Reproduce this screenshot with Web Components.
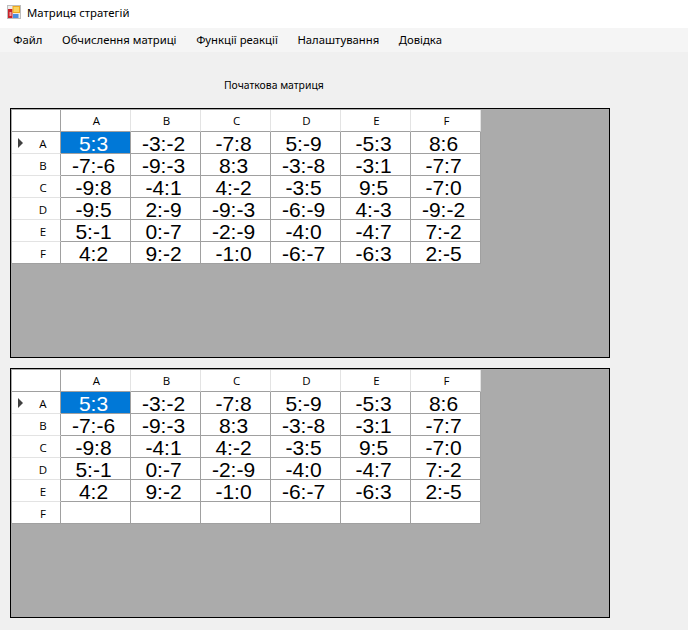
<!DOCTYPE html>
<html><head><meta charset="utf-8"><style>
html,body{margin:0;padding:0;background:#f0f0f0;width:688px;height:630px;overflow:hidden}
body{font:12px "Noto Sans",sans-serif;color:#000}
win-form{display:block}
</style></head><body>
<win-form>
<win-titlebar>Матриця стратегій</win-titlebar>
<win-menubar><win-menu>Файл</win-menu><win-menu>Обчислення матриці</win-menu><win-menu>Функції реакції</win-menu><win-menu>Налаштування</win-menu><win-menu>Довідка</win-menu></win-menubar>
<win-label>Початкова матриця</win-label>
<data-grid rows="5:3 -3:-2 -7:8 5:-9 -5:3 8:6|-7:-6 -9:-3 8:3 -3:-8 -3:1 -7:7|-9:8 -4:1 4:-2 -3:5 9:5 -7:0|-9:5 2:-9 -9:-3 -6:-9 4:-3 -9:-2|5:-1 0:-7 -2:-9 -4:0 -4:7 7:-2|4:2 9:-2 -1:0 -6:-7 -6:3 2:-5"></data-grid>
<data-grid rows="5:3 -3:-2 -7:8 5:-9 -5:3 8:6|-7:-6 -9:-3 8:3 -3:-8 -3:1 -7:7|-9:8 -4:1 4:-2 -3:5 9:5 -7:0|5:-1 0:-7 -2:-9 -4:0 -4:7 7:-2|4:2 9:-2 -1:0 -6:-7 -6:3 2:-5|     "></data-grid>
</win-form>
<script>
const def=(n,css,html,init)=>customElements.define(n,class extends HTMLElement{
  constructor(){super();this.attachShadow({mode:'open'}).innerHTML='<style>'+css+'</style>'+html;}
  connectedCallback(){init&&init(this)}
});
const UI='"Noto Sans",sans-serif';
def('win-titlebar',`:host{display:flex;align-items:center;gap:6px;height:28px;padding:0 0 4px 7px;box-sizing:border-box;background:#fff;font:11.35px ${UI}}svg{display:block}`,
`<svg width="14" height="14" viewBox="0 0 14 14"><rect x=".5" y=".5" width="13" height="13" fill="#ececec" stroke="#bdbdbd"/><rect x="1" y="4" width="4.500" height="9" fill="#c8242c"/><rect x="2.500" y="7" width="2" height="4" fill="#f2a0a0"/><rect x="5.500" y="1" width="7.500" height="7" fill="#eda820"/><rect x="6.500" y="2" width="5.500" height="5" fill="#fbd45e"/><rect x="6" y="9" width="5.500" height="4" fill="#4a8fe0"/></svg><slot></slot>`);
def('win-menubar',`:host{display:flex;height:24px;box-sizing:border-box;padding:0 0 2px 3.500px;align-items:center;background:#f5f5f5;font:11.3px ${UI}}`,`<slot></slot>`);
def('win-menu',`:host{display:block;padding:0 9.800px;white-space:nowrap}`,`<slot></slot>`);
def('win-label',`:host{display:flex;height:56px;box-sizing:border-box;padding:25px 0 0 224px;font:10.4px ${UI};line-height:16px}`,`<slot></slot>`);
def('data-grid',`:host{display:block;width:600px;height:250px;box-sizing:border-box;margin:0 0 10px 10px;border:1px solid #000;background:#ababab;padding:1px 0 0 1px;overflow:hidden}
.g{display:grid;grid-template-columns:49px repeat(6,70px);grid-auto-rows:22px;width:max-content}
.g>div{background:#fff;box-sizing:border-box;border-right:1px solid #a0a0a0;border-bottom:1px solid #a0a0a0;display:flex;align-items:center;justify-content:center;position:relative;white-space:nowrap}
.h{font:11.5px "Open Sans",sans-serif}
.ch{border-right-color:#e3e3e3!important;padding-left:2px}
.corner{border-right-color:#a0a0a0!important}
.rh{border-bottom-color:#e3e3e3!important;padding:2px 0 0 14px}
.rh.last{border-bottom-color:#a0a0a0!important}
.c{font:21px "Liberation Sans",Arial,sans-serif;padding:2px 4px 0 0}
.sel{background:#0078d7!important;color:#fff}
.arrow{position:absolute;left:6px;top:6px;width:0;height:0;border-left:5px solid #404040;border-top:5px solid transparent;border-bottom:5px solid transparent}`,
`<div class="g"></div>`,el=>{
  const L='ABCDEF',g=el.shadowRoot.querySelector('.g');
  const rows=el.getAttribute('rows').split('|').map(r=>r.split(' '));
  let h='<div class="h ch corner"></div>';
  for(const c of L)h+=`<div class="h ch">${c}</div>`;
  rows.forEach((r,i)=>{
    h+=`<div class="h rh${i==5?' last':''}">${i==0?'<span class="arrow"></span>':''}${L[i]}</div>`;
    r.forEach((v,j)=>h+=`<div class="c${i==0&&j==0?' sel':''}">${v}</div>`);
  });
  g.innerHTML=h;
});
</script>
</body></html>
